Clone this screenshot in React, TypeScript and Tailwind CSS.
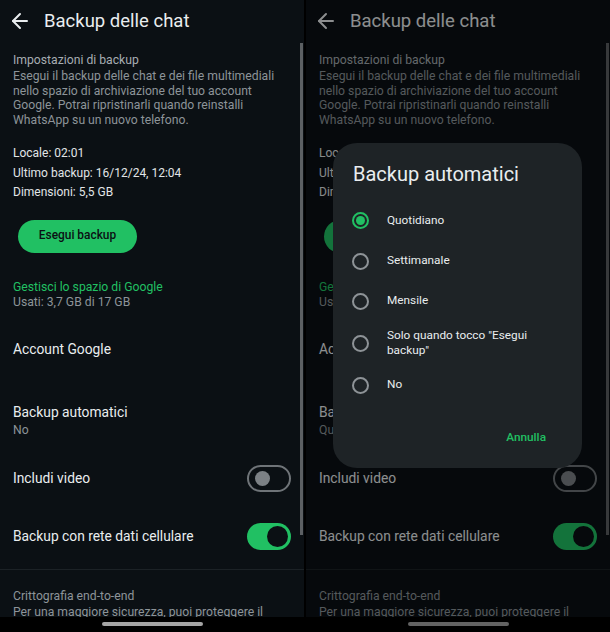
import React from "react";

const F = { fontFamily: "Roboto, 'Noto Sans', sans-serif" };

function Arrow({ color }: { color: string }) {
  return (
    <svg width="24" height="24" viewBox="0 0 24 24" fill="none" stroke={color} strokeWidth="2" strokeLinecap="round" strokeLinejoin="round">
      <path d="M19 12H5" />
      <path d="M12 19l-7-7 7-7" />
    </svg>
  );
}

function ToggleOff() {
  return (
    <div className="w-[44px] h-[27px] rounded-full border-2 border-[#6f7478] flex items-center pl-[6px] shrink-0">
      <div className="w-[15px] h-[15px] rounded-full bg-[#7c8185]" />
    </div>
  );
}

function ToggleOn() {
  return (
    <div className="w-[44px] h-[27px] rounded-full bg-[#21c063] flex items-center justify-end pr-[3px] shrink-0">
      <div className="w-[21px] h-[21px] rounded-full bg-[#0b1014]" />
    </div>
  );
}

function Phone({ autoValue }: { autoValue: string }) {
  return (
    <div className="relative w-[304px] h-[632px] bg-[#0b1014] flex flex-col overflow-hidden" style={F}>
      <div className="h-[42px] shrink-0 flex items-center pl-[8px]">
        <Arrow color="#e9edef" />
        <span className="ml-[12px] text-[18.5px] leading-[24px] text-[#e9edef]">Backup delle chat</span>
      </div>
      <div className="flex-1 min-h-0 overflow-hidden px-[13px]">
        <div className="pt-[11px] text-[12.2px] leading-[15px] text-[#a6adb2]">Impostazioni di backup</div>
        <div className="mt-[1px] text-[12.2px] leading-[14.5px] text-[#8d9499]">
          Esegui il backup delle chat e dei file multimediali nello spazio di archiviazione del tuo account Google. Potrai ripristinarli quando reinstalli WhatsApp su un nuovo telefono.
        </div>
        <div className="mt-[17px] text-[12px] leading-[19.5px] text-[#e1e5e7]">
          <div>Locale: 02:01</div>
          <div>Ultimo backup: 16/12/24, 12:04</div>
          <div>Dimensioni: 5,5 GB</div>
        </div>
        <div className="mt-[17px] ml-[5px] w-[119px] h-[33px] rounded-full bg-[#21c063] flex items-center justify-center text-[11.9px] font-medium text-[#0b1014]">
          Esegui backup
        </div>
        <div className="mt-[27px] text-[12.2px] leading-[15px] text-[#21c063]">Gestisci lo spazio di Google</div>
        <div className="text-[12.2px] leading-[15px] text-[#8d9499]">Usati: 3,7 GB di 17 GB</div>
        <div className="mt-[29px] text-[13.8px] leading-[20px] text-[#e9edef]">Account Google</div>
        <div className="mt-[43px] text-[13.8px] leading-[20px] text-[#e9edef]">Backup automatici</div>
        <div className="text-[12.2px] leading-[16px] text-[#8d9499]">{autoValue}</div>
        <div className="mt-[27px] h-[27px] flex items-center justify-between">
          <span className="text-[13.8px] text-[#e9edef]">Includi video</span>
          <ToggleOff />
        </div>
        <div className="mt-[31px] h-[27px] flex items-center justify-between">
          <span className="text-[13.8px] text-[#e9edef]">Backup con rete dati cellulare</span>
          <ToggleOn />
        </div>
        <div className="mt-[19px] -mx-[13px] h-px bg-[#1c2226]" />
        <div className="mt-[18px] text-[12.2px] leading-[16px] text-[#8d9499]">Crittografia end-to-end</div>
        <div className="text-[12.2px] leading-[16px] text-[#8d9499]">Per una maggiore sicurezza, puoi proteggere il backup con la crittografia end-to-end.</div>
      </div>
      <div className="h-[15px] shrink-0 bg-black flex justify-center pt-[5px]">
        <div className="w-[101px] h-[4px] rounded-full bg-[#a5a5a5]" />
      </div>
      <div className="absolute left-[300px] top-[43px] w-[3px] h-[492px] bg-[#5c6063]" />
    </div>
  );
}

function Radio({ checked }: { checked?: boolean }) {
  return checked ? (
    <div className="w-[17px] h-[17px] rounded-full border-2 border-[#21c063] flex items-center justify-center shrink-0">
      <div className="w-[9px] h-[9px] rounded-full bg-[#21c063]" />
    </div>
  ) : (
    <div className="w-[17px] h-[17px] rounded-full border-2 border-[#8e9397] shrink-0" />
  );
}

function Dialog() {
  return (
    <div className="absolute left-[27px] top-[143px] w-[249px] h-[325px] rounded-[24px] bg-[#1e2326] flex flex-col" style={F}>
      <div className="pl-[20px] pt-[19px] text-[20px] leading-[24px] text-[#e9edef]">Backup automatici</div>
      <div className="mt-[14px] flex flex-col">
        <div className="h-[41px] flex items-center pl-[19px]">
          <Radio checked />
          <span className="ml-[18px] text-[11.8px] text-[#e9edef]">Quotidiano</span>
        </div>
        <div className="h-[40px] flex items-center pl-[19px]">
          <Radio />
          <span className="ml-[18px] text-[11.8px] text-[#e9edef]">Settimanale</span>
        </div>
        <div className="h-[40px] flex items-center pl-[19px]">
          <Radio />
          <span className="ml-[18px] text-[11.8px] text-[#e9edef]">Mensile</span>
        </div>
        <div className="h-[44px] flex items-center pl-[19px]">
          <Radio />
          <span className="ml-[18px] w-[150px] text-[11.8px] leading-[15px] text-[#e9edef]">Solo quando tocco "Esegui backup"</span>
        </div>
        <div className="h-[40px] flex items-center pl-[19px]">
          <Radio />
          <span className="ml-[18px] text-[11.8px] text-[#e9edef]">No</span>
        </div>
      </div>
      <div className="mt-[24px] flex justify-end pr-[36px] text-[11.8px] leading-[16px] font-medium text-[#21c063]">Annulla</div>
    </div>
  );
}

export default function App() {
  return (
    <div className="w-[610px] h-[632px] bg-black flex gap-[2px] overflow-hidden">
      <Phone autoValue="No" />
      <div className="relative">
        <Phone autoValue="Quotidiano" />
        <div className="absolute inset-0 bg-black/40" />
        <Dialog />
      </div>
    </div>
  );
}
